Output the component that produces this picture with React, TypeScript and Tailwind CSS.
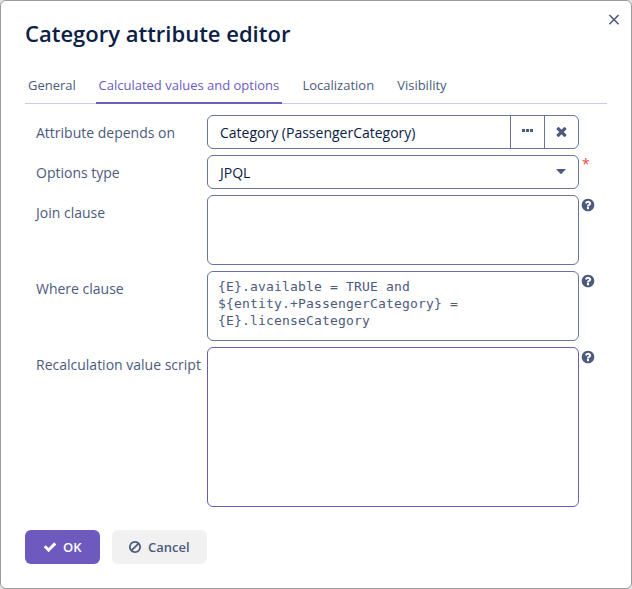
import type { ReactNode } from "react";

const PATHS = {
  check:
    "M1671 566q0 40-28 68l-724 724-136 136q-28 28-68 28t-68-28l-136-136-362-362q-28-28-28-68t28-68l136-136q28-28 68-28t68 28l294 295 656-657q28-28 68-28t68 28l136 136q28 28 28 68z",
  times:
    "M1490 1322q0 40-28 68l-136 136q-28 28-68 28t-68-28l-294-294-294 294q-28 28-68 28t-68-28l-136-136q-28-28-28-68t28-68l294-294-294-294q-28-28-28-68t28-68l136-136q28-28 68-28t68 28l294 294 294-294q28-28 68-28t68 28l136 136q28 28 28 68t-28 68l-294 294 294 294q28 28 28 68z",
  ban: "M1440 893q0-161-87-295l-754 753q137 89 297 89 111 0 211.5-43.5t173.5-116.5 116-174.5 43-212.5zm-999 299l755-754q-135-91-300-91-148 0-273 73t-198 199-73 274q0 162 89 299zm1223-299q0 157-61 300t-163.5 246-245 164-298.5 61-298.5-61-245-164-163.5-246-61-300 61-299.5 163.5-245.5 245-164 298.5-61 298.5 61 245 164 163.5 245.5 61 299.5z",
  question:
    "M1024 1376v-192q0-14-9-23t-23-9h-192q-14 0-23 9t-9 23v192q0 14 9 23t23 9h192q14 0 23-9t9-23zm256-672q0-88-55.5-163t-138.5-116-170-41q-243 0-371 213-15 24 8 42l132 100q7 6 19 6 16 0 25-12 53-68 86-92 34-24 86-24 48 0 85.5 26t37.5 59q0 38-20 61t-68 45q-63 28-115.5 86.5t-52.5 125.5v36q0 14 9 23t23 9h192q14 0 23-9t9-23q0-19 21.5-49.5t54.5-49.5q32-18 49-28.5t46-35 44.5-48 28-60.5 12.5-81zm384 192q0 209-103 385.5t-279.5 279.5-385.5 103-385.5-103-279.5-279.5-103-385.5 103-385.5 279.5-279.5 385.5-103 385.5 103 279.5 279.5 103 385.5z",
};

function Icon({ name, className }: { name: keyof typeof PATHS; className: string }) {
  return (
    <svg viewBox="0 0 1792 1792" fill="currentColor" className={className}>
      <path d={PATHS[name]} />
    </svg>
  );
}

function Row({ label, children, mark }: { label: string; children: ReactNode; mark?: ReactNode }) {
  return (
    <div className="flex items-start">
      <div className="w-[171px] shrink-0 pt-2 text-sm leading-5 whitespace-nowrap">{label}</div>
      <div className="w-[372px] shrink-0">{children}</div>
      {mark}
    </div>
  );
}

const help = <Icon name="question" className="mt-[3px] ml-0.5 size-[14px] scale-105 text-[#4c5a7d]" />;

export default function App() {
  return (
    <div className="h-[589px] w-[632px] bg-[#e2e2e2] font-['Open_Sans',sans-serif] text-[#4c5a7d]">
      <div className="flex h-full flex-col rounded-[6px] border border-[#9b9b9b] bg-white pt-[10px] pr-[11px] pl-6">
        <header className="flex h-[54px] items-start justify-between">
          <h1 className="pt-1.5 text-[22px] leading-8 font-semibold text-[#0b2046]">Category attribute editor</h1>
          <svg viewBox="0 0 12 12" className="mt-[3px] size-3 text-[#4c5a7d]" fill="none" stroke="currentColor" strokeWidth="1.6">
            <path d="M1.4 1l9.2 9.2M10.6 1L1.4 10.2" />
          </svg>
        </header>

        <nav className="flex h-[39px] w-[582px] gap-[17px] border-b border-[#cfc9e4] text-[13px] leading-5">
          <span className="h-[39px] w-[54px] pt-[10px] pl-[3px]">General</span>
          <span className="h-[39px] w-[186px] border-b-2 border-[#6e59bf] pt-[10px] pl-[2.5px] whitespace-nowrap text-[#6e59bf]">
            Calculated values and options
          </span>
          <span className="pt-[10px] pl-[3.5px]">Localization</span>
          <span className="pt-[10px] pl-[6px]">Visibility</span>
        </nav>

        <main className="flex flex-col gap-1.5 pt-[11px] pl-[11px]">
          <Row label="Attribute depends on">
            <div className="flex h-[34px] rounded-md border border-[#667599]">
              <span className="flex-1 pt-px pl-3 text-sm leading-8 text-[#0b2046]">Category (PassengerCategory)</span>
              <span className="flex w-[34px] justify-center gap-px border-l border-[#667599] pt-[13px]">
                <i className="size-[3px] bg-[#4c5a7d]" />
                <i className="size-[3px] bg-[#4c5a7d]" />
                <i className="size-[3px] bg-[#4c5a7d]" />
              </span>
              <span className="flex w-[34px] justify-center border-l border-[#667599] pt-2 pr-px">
                <Icon name="times" className="size-[15px]" />
              </span>
            </div>
          </Row>
          <Row
            label="Options type"
            mark={<span className="ml-[3px] h-5 text-[14px] leading-[18px] text-[#f0473c]">*</span>}
          >
            <div className="flex h-[34px] justify-between rounded-md border border-[#667599] pr-3 pl-3 text-sm leading-8 text-[#0b2046]">
              <span className="pt-px">JPQL</span>
              <svg viewBox="0 0 10 5" className="mt-[13px] h-[5px] w-[10px] fill-[#4c5a7d]">
                <path d="M.5 0h9v.6L5.8 4.6Q5 5.3 4.2 4.6L.5.6z" />
              </svg>
            </div>
          </Row>
          <Row label="Join clause" mark={help}>
            <div className="h-[70px] rounded-md border border-[#667599]" />
          </Row>
          <Row label="Where clause" mark={help}>
            <div className="h-[70px] rounded-md border border-[#667599] pt-1.5 pl-[10px] font-['DejaVu_Sans_Mono',monospace] text-[13px] leading-[17px] tracking-[0.174px] whitespace-pre">
              {"{E}.available = TRUE and\n${entity.+PassengerCategory} =\n{E}.licenseCategory"}
            </div>
          </Row>
          <Row label="Recalculation value script" mark={help}>
            <div className="h-[160px] rounded-md border border-[#6e59bf]" />
          </Row>
        </main>

        <footer className="flex gap-3 pt-[23px] text-[13px] font-semibold">
          <button className="flex h-[34px] w-[75px] items-center rounded-md bg-[#6e59bf] pl-[18px] text-white">
            <Icon name="check" className="mr-[6px] size-[14px]" />
            <span className="pt-px">OK</span>
          </button>
          <button className="flex h-[34px] w-[95px] items-center rounded-md bg-[#f1f1f1] pl-4">
            <Icon name="ban" className="mr-[6px] size-[14px]" />
            <span className="pt-px">Cancel</span>
          </button>
        </footer>
      </div>
    </div>
  );
}
